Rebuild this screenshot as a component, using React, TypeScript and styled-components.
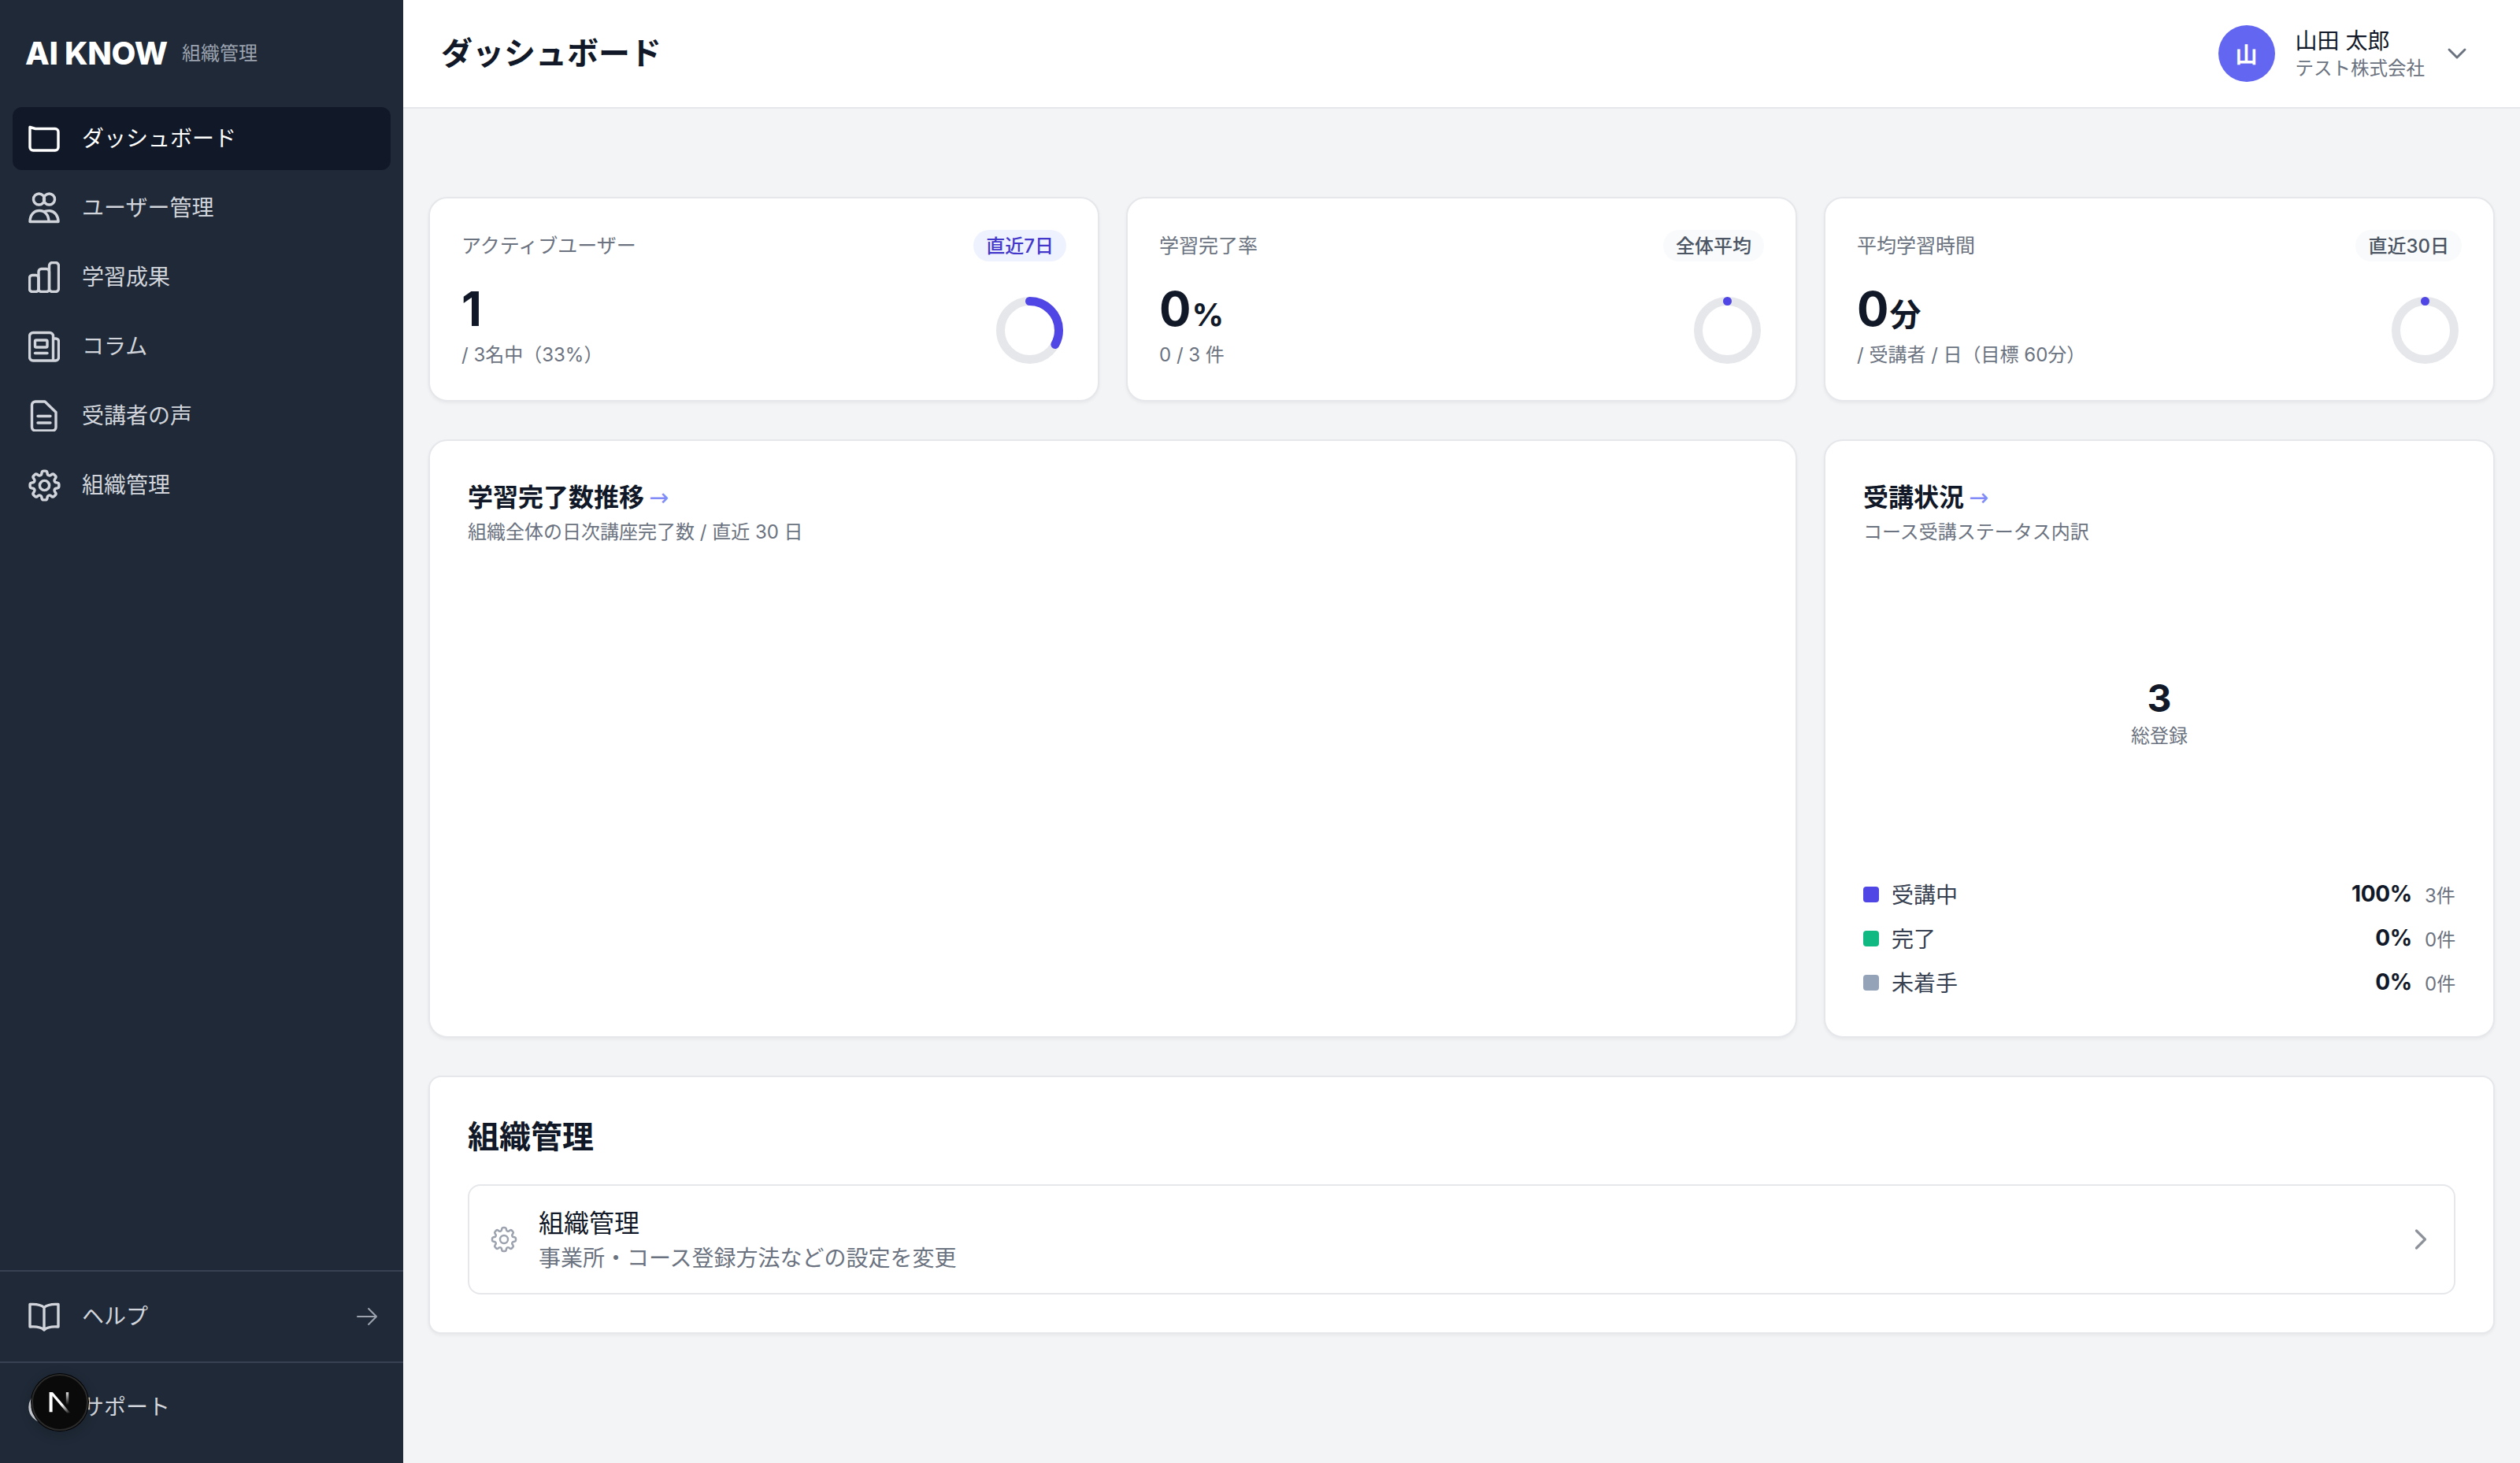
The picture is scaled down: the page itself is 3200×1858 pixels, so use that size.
import React from "react";
import styled, { createGlobalStyle } from "styled-components";
import { ChevronDown, ChevronRight } from "lucide-react";
import { HiOutlineArrowRight, HiOutlineCog8Tooth } from "react-icons/hi2";

const Global = createGlobalStyle`
  html, body { margin: 0; padding: 0; height: 100%; }
  body {
    font-family: Inter, "Noto Sans CJK JP", sans-serif;
    background: #f3f4f6;
    color: #111827;
  }
  * { box-sizing: border-box; }
`;

const Shell = styled.div`
  display: flex;
  height: 1858px;
  overflow: hidden;
  position: relative;
`;

const Sidebar = styled.aside`
  width: 512px;
  flex: none;
  display: flex;
  flex-direction: column;
  background: #1f2937;
`;

const Brand = styled.div`
  height: 136px;
  flex: none;
  display: flex;
  align-items: center;
  gap: 18px;
  padding-left: 32px;
`;

const BrandMark = styled.span`
  font-size: 40px;
  font-weight: 800;
  letter-spacing: -0.3px;
  color: #ffffff;
  line-height: 1;
`;

const BrandSub = styled.span`
  font-size: 24px;
  color: #9ca3af;
  line-height: 32px;
`;

const Nav = styled.nav`
  flex: 1;
  display: flex;
  flex-direction: column;
  gap: 8px;
  padding: 0 16px;
`;

const NavItem = styled.div<{ $active?: boolean }>`
  height: 80px;
  display: flex;
  align-items: center;
  gap: 28px;
  padding: 0 14px 0 20px;
  border-radius: 12px;
  font-size: 28px;
  line-height: 40px;
  background: ${(p) => (p.$active ? "#111827" : "transparent")};
  color: ${(p) => (p.$active ? "#ffffff" : "#d1d5db")};
`;

const NavLabel = styled.span`
  flex: 1;
`;

const FooterSection = styled.div<{ $bottom: number; $top: number }>`
  flex: none;
  border-top: 2px solid #374151;
  padding: ${(p) => p.$top}px 16px ${(p) => p.$bottom}px;
`;

const IconSvg = styled.svg`
  width: 40px;
  height: 40px;
  flex: none;
  fill: none;
  stroke: currentColor;
  stroke-width: 3.4;
  stroke-linecap: round;
  stroke-linejoin: round;
`;

const GearWrap = styled.span`
  width: 40px;
  height: 40px;
  flex: none;
  display: flex;
  align-items: center;
  justify-content: center;
  overflow: visible;
  svg {
    width: 49px;
    height: 49px;
    flex: none;
    stroke-width: 1.7;
  }
`;

const HelpArrow = styled(HiOutlineArrowRight)`
  width: 32px;
  height: 32px;
  flex: none;
  color: #9ca3af;
`;

const DevBadge = styled.div`
  position: absolute;
  left: 40px;
  top: 1745px;
  width: 72px;
  height: 72px;
  border-radius: 50%;
  background: #0a0a0a;
  border: 2px solid #2b2b2b;
  box-shadow: 0 0 0 1px #000000, 0 4px 16px rgba(0, 0, 0, 0.2);
  display: flex;
  align-items: center;
  justify-content: center;
`;

const Main = styled.div`
  flex: 1;
  min-width: 0;
  display: flex;
  flex-direction: column;
`;

const Header = styled.header`
  height: 138px;
  flex: none;
  background: #ffffff;
  border-bottom: 2px solid #e5e7eb;
  display: flex;
  align-items: center;
  justify-content: space-between;
  padding: 0 60px 0 48px;
`;

const PageTitle = styled.h1`
  margin: 0;
  font-size: 40px;
  line-height: 56px;
  font-weight: 700;
  color: #111827;
`;

const UserBox = styled.div`
  display: flex;
  align-items: center;
`;

const Avatar = styled.div`
  width: 72px;
  height: 72px;
  border-radius: 50%;
  background: #6366f1;
  color: #ffffff;
  font-size: 28px;
  font-weight: 700;
  display: flex;
  align-items: center;
  justify-content: center;
  margin-right: 26px;
`;

const UserText = styled.div`
  display: flex;
  flex-direction: column;
  gap: 1px;
  margin-right: 21px;
`;

const UserName = styled.span`
  font-size: 28px;
  line-height: 36px;
  color: #111827;
`;

const UserOrg = styled.span`
  font-size: 23.5px;
  line-height: 32px;
  color: #6b7280;
`;

const UserChevron = styled(ChevronDown)`
  width: 40px;
  height: 40px;
  color: #6b7280;
  flex: none;
`;

const Content = styled.main`
  flex: 1;
  padding: 112px 32px 0;
  display: grid;
  grid-template-columns: repeat(3, minmax(0, 1fr));
  grid-auto-rows: min-content;
  gap: 48px 34px;
`;

const Card = styled.section`
  background: #ffffff;
  border: 2px solid #e5e7eb;
  border-radius: 24px;
  box-shadow: 0 2px 4px rgba(0, 0, 0, 0.05);
`;

const StatCard = styled(Card)`
  height: 260px;
  padding: 40px 40px 39px;
  display: flex;
  flex-direction: column;
`;

const StatHead = styled.div`
  display: flex;
  align-items: center;
  justify-content: space-between;
  height: 40px;
`;

const StatLabel = styled.span`
  font-size: 25px;
  line-height: 32px;
  color: #6b7280;
`;

const Pill = styled.span<{ $accent?: boolean }>`
  height: 40px;
  display: flex;
  align-items: center;
  padding: 0 16px 4px;
  border-radius: 20px;
  font-size: 24px;
  font-weight: 500;
  color: ${(p) => (p.$accent ? "#4338ca" : "#4b5563")};
  background: ${(p) => (p.$accent ? "#eef2ff" : "#f9fafb")};
`;

const StatBody = styled.div`
  display: flex;
  justify-content: space-between;
  align-items: flex-end;
  margin-top: 30px;
`;

const StatValue = styled.div`
  display: flex;
  align-items: baseline;
  gap: 2px;
  height: 60px;
  font-size: 60px;
  line-height: 60px;
  letter-spacing: -1px;
  font-weight: 700;
  color: #111827;
`;

const StatUnit = styled.span`
  font-size: 40px;
  line-height: 40px;
  letter-spacing: 0;
  font-weight: 700;
`;

const StatSub = styled.div`
  margin-top: 13px;
  font-size: 24px;
  line-height: 32px;
  color: #6b7280;
`;

const DonutSvg = styled.svg`
  width: 91px;
  height: 91px;
  flex: none;
  margin: 0 1px 2px 0;
  fill: none;
  stroke-width: 11;
`;

const ChartCard = styled(Card)<{ $span?: number }>`
  height: 760px;
  grid-column: span ${(p) => p.$span ?? 1};
  padding: 50px 48px 52px;
  display: flex;
  flex-direction: column;
`;

const PanelTitle = styled.h2`
  margin: 0;
  display: flex;
  align-items: center;
  gap: 6px;
  font-size: 32px;
  line-height: 44px;
  font-weight: 700;
  color: #111827;
`;

const TitleArrow = styled.span`
  font-family: "DejaVu Sans", sans-serif;
  font-size: 30px;
  line-height: 44px;
  font-weight: 400;
  color: #818cf8;
`;

const PanelSub = styled.p`
  margin: 6px 0 0;
  font-size: 24px;
  line-height: 32px;
  color: #6b7280;
`;

const TotalArea = styled.div`
  flex: 1;
  margin-bottom: 2px;
  display: flex;
  flex-direction: column;
  align-items: center;
  justify-content: center;
`;

const TotalValue = styled.div`
  font-size: 48px;
  line-height: 56px;
  font-weight: 700;
  color: #111827;
`;

const TotalLabel = styled.div`
  margin-top: 4px;
  font-size: 24px;
  line-height: 32px;
  color: #6b7280;
`;

const Legend = styled.div`
  display: flex;
  flex-direction: column;
  gap: 24px;
  padding-right: 2px;
`;

const LegendRow = styled.div`
  display: flex;
  align-items: center;
  height: 32px;
`;

const Swatch = styled.span<{ $color: string }>`
  width: 20px;
  height: 20px;
  border-radius: 4px;
  background: ${(p) => p.$color};
  margin-right: 16px;
  flex: none;
`;

const LegendName = styled.span`
  flex: 1;
  padding-bottom: 3px;
  font-size: 28px;
  color: #374151;
`;

const LegendPct = styled.span`
  padding-bottom: 3px;
  font-size: 28px;
  font-weight: 700;
  letter-spacing: -0.3px;
  color: #111827;
`;

const LegendCount = styled.span`
  width: 37px;
  margin-left: 16px;
  padding-bottom: 1px;
  font-size: 24px;
  color: #6b7280;
  white-space: nowrap;
`;

const OrgCard = styled(Card)`
  grid-column: span 3;
  border-radius: 16px;
  padding: 48px 48px 48px;
`;

const OrgTitle = styled.h2`
  margin: 0;
  font-size: 40px;
  line-height: 56px;
  font-weight: 700;
  color: #111827;
`;

const OrgRow = styled.div`
  margin-top: 32px;
  height: 140px;
  border: 2px solid #e5e7eb;
  border-radius: 16px;
  display: flex;
  align-items: center;
  gap: 24px;
  padding: 0 20px 0 24px;
`;

const OrgGear = styled(HiOutlineCog8Tooth)`
  width: 40px;
  height: 40px;
  flex: none;
  color: #9ca3af;
`;

const OrgText = styled.div`
  flex: 1;
  display: flex;
  flex-direction: column;
  gap: 2px;
`;

const OrgName = styled.span`
  padding-top: 2px;
  font-size: 32px;
  line-height: 44px;
  color: #111827;
`;

const OrgDesc = styled.span`
  font-size: 28px;
  line-height: 40px;
  color: #6b7280;
`;

const OrgChevron = styled(ChevronRight)`
  width: 44px;
  height: 44px;
  flex: none;
  color: #8e939b;
`;

const Icon = ({ children }: { children: React.ReactNode }) => (
  <IconSvg viewBox="0 0 40 40">{children}</IconSvg>
);

const FolderIcon = () => (
  <Icon>
    <path d="M2 5.5V31a4 4 0 0 0 4 4h28a4 4 0 0 0 4-4V11.5a4 4 0 0 0-4-4H9Z" />
  </Icon>
);
const UsersIcon = () => (
  <Icon>
    <circle cx="13.5" cy="9" r="7" />
    <circle cx="26.5" cy="9" r="7" />
    <path d="M2 37.5C2 29 7 23.5 14 23.5S26 29 26 37.5M21 24.5C24 23.6 26 23.5 27.5 23.7C33.5 24.5 38 30 38 37.5M2 37.5H38" />
  </Icon>
);
const BarsIcon = () => (
  <Icon>
    <rect x="1.5" y="17.5" width="11.5" height="21" rx="3.5" />
    <rect x="13" y="9.5" width="13.5" height="29" rx="3.5" />
    <rect x="26.5" y="1.5" width="12" height="37" rx="4" />
  </Icon>
);
const PaperIcon = () => (
  <Icon>
    <path d="M34.5 38H6a4.5 4.5 0 0 1-4.5-4.5V7A4.5 4.5 0 0 1 6 2.5h21A4.5 4.5 0 0 1 31.5 7v31M31.5 10H35a3.5 3.5 0 0 1 3.5 3.5V34a4 4 0 0 1-4 4" />
    <rect x="8.5" y="12" width="15.5" height="9" rx="1.5" />
    <path d="M8.5 28.5H24" />
  </Icon>
);
const DocIcon = () => (
  <Icon>
    <path d="M9 2H21L35 15.5V34.5A4.5 4.5 0 0 1 30.5 39H9a4.5 4.5 0 0 1-4.5-4.5V6.5A4.5 4.5 0 0 1 9 2Z" />
    <path d="M12 20.5H28M12 29H28" />
  </Icon>
);
const GearIcon = () => (
  <GearWrap>
    <HiOutlineCog8Tooth />
  </GearWrap>
);
const BookIcon = () => (
  <Icon>
    <path d="M20 8.5C16 5 9 4 2 4.5V33C9 32.5 16 33 20 37C24 33 31 32.5 38 33V4.5C31 4 24 5 20 8.5ZM20 8.5V37" />
  </Icon>
);
const SupportIcon = () => (
  <Icon>
    <circle cx="20" cy="20" r="18" />
  </Icon>
);

const Donut = ({ pct }: { pct: number }) => {
  const r = 37;
  const c = 2 * Math.PI * r;
  return (
    <DonutSvg viewBox="0 0 91 91">
      <circle cx="45.5" cy="45.5" r={r} stroke="#e5e7eb" />
      <circle
        cx="45.5"
        cy="45.5"
        r={r}
        stroke="#4f46e5"
        strokeLinecap="round"
        strokeDasharray={`${(c * pct) / 100} ${c}`}
        transform="rotate(-90 45.5 45.5)"
      />
    </DonutSvg>
  );
};

const NAV: { label: string; icon: React.ReactNode; active?: boolean }[] = [
  { label: "ダッシュボード", icon: <FolderIcon />, active: true },
  { label: "ユーザー管理", icon: <UsersIcon /> },
  { label: "学習成果", icon: <BarsIcon /> },
  { label: "コラム", icon: <PaperIcon /> },
  { label: "受講者の声", icon: <DocIcon /> },
  { label: "組織管理", icon: <GearIcon /> },
];

const STATS = [
  { label: "アクティブユーザー", pill: "直近7日", accent: true, value: "1", unit: "", sub: "/ 3名中（33%）", pct: 33 },
  { label: "学習完了率", pill: "全体平均", accent: false, value: "0", unit: "%", sub: "0 / 3 件", pct: 0 },
  { label: "平均学習時間", pill: "直近30日", accent: false, value: "0", unit: "分", sub: "/ 受講者 / 日（目標 60分）", pct: 0 },
];

const LEGEND = [
  { name: "受講中", color: "#4f46e5", pct: "100%", count: "3件" },
  { name: "完了", color: "#10b981", pct: "0%", count: "0件" },
  { name: "未着手", color: "#94a3b8", pct: "0%", count: "0件" },
];

export default function App() {
  return (
    <Shell>
      <Global />
      <Sidebar>
        <Brand>
          <BrandMark>AI KNOW</BrandMark>
          <BrandSub>組織管理</BrandSub>
        </Brand>
        <Nav>
          {NAV.map((n) => (
            <NavItem key={n.label} $active={n.active}>
              {n.icon}
              <NavLabel>{n.label}</NavLabel>
            </NavItem>
          ))}
        </Nav>
        <FooterSection $top={17} $bottom={17}>
          <NavItem>
            <BookIcon />
            <NavLabel>ヘルプ</NavLabel>
            <HelpArrow />
          </NavItem>
        </FooterSection>
        <FooterSection $top={16} $bottom={31}>
          <NavItem>
            <SupportIcon />
            <NavLabel>サポート</NavLabel>
          </NavItem>
        </FooterSection>
      </Sidebar>
      <Main>
        <Header>
          <PageTitle>ダッシュボード</PageTitle>
          <UserBox>
            <Avatar>山</Avatar>
            <UserText>
              <UserName>山田 太郎</UserName>
              <UserOrg>テスト株式会社</UserOrg>
            </UserText>
            <UserChevron strokeWidth={1.75} />
          </UserBox>
        </Header>
        <Content>
          {STATS.map((s) => (
            <StatCard key={s.label}>
              <StatHead>
                <StatLabel>{s.label}</StatLabel>
                <Pill $accent={s.accent}>{s.pill}</Pill>
              </StatHead>
              <StatBody>
                <div>
                  <StatValue>
                    {s.value}
                    {s.unit && <StatUnit>{s.unit}</StatUnit>}
                  </StatValue>
                  <StatSub>{s.sub}</StatSub>
                </div>
                <Donut pct={s.pct} />
              </StatBody>
            </StatCard>
          ))}
          <ChartCard $span={2}>
            <PanelTitle>
              学習完了数推移<TitleArrow>→</TitleArrow>
            </PanelTitle>
            <PanelSub>組織全体の日次講座完了数 / 直近 30 日</PanelSub>
          </ChartCard>
          <ChartCard>
            <PanelTitle>
              受講状況<TitleArrow>→</TitleArrow>
            </PanelTitle>
            <PanelSub>コース受講ステータス内訳</PanelSub>
            <TotalArea>
              <TotalValue>3</TotalValue>
              <TotalLabel>総登録</TotalLabel>
            </TotalArea>
            <Legend>
              {LEGEND.map((l) => (
                <LegendRow key={l.name}>
                  <Swatch $color={l.color} />
                  <LegendName>{l.name}</LegendName>
                  <LegendPct>{l.pct}</LegendPct>
                  <LegendCount>{l.count}</LegendCount>
                </LegendRow>
              ))}
            </Legend>
          </ChartCard>
          <OrgCard>
            <OrgTitle>組織管理</OrgTitle>
            <OrgRow>
              <OrgGear />
              <OrgText>
                <OrgName>組織管理</OrgName>
                <OrgDesc>事業所・コース登録方法などの設定を変更</OrgDesc>
              </OrgText>
              <OrgChevron strokeWidth={1.75} />
            </OrgRow>
          </OrgCard>
        </Content>
      </Main>
      <DevBadge>
        <svg width="38" height="38" viewBox="0 0 34 34" fill="none">
          <defs>
            <linearGradient id="nDiag" x1="10" y1="6" x2="28" y2="30" gradientUnits="userSpaceOnUse">
              <stop offset="0.55" stopColor="#ffffff" />
              <stop offset="1" stopColor="#ffffff" stopOpacity="0" />
            </linearGradient>
            <linearGradient id="nStem" x1="25" y1="5" x2="25" y2="20" gradientUnits="userSpaceOnUse">
              <stop offset="0" stopColor="#ffffff" stopOpacity="0.9" />
              <stop offset="1" stopColor="#ffffff" stopOpacity="0" />
            </linearGradient>
          </defs>
          <path d="M5 5.5H8.6V28H5Z" fill="#ffffff" />
          <path d="M5 5.5H9L29 29H25.2Z" fill="url(#nDiag)" />
          <path d="M24 5.5H27V22H24Z" fill="url(#nStem)" />
        </svg>
      </DevBadge>
    </Shell>
  );
}
